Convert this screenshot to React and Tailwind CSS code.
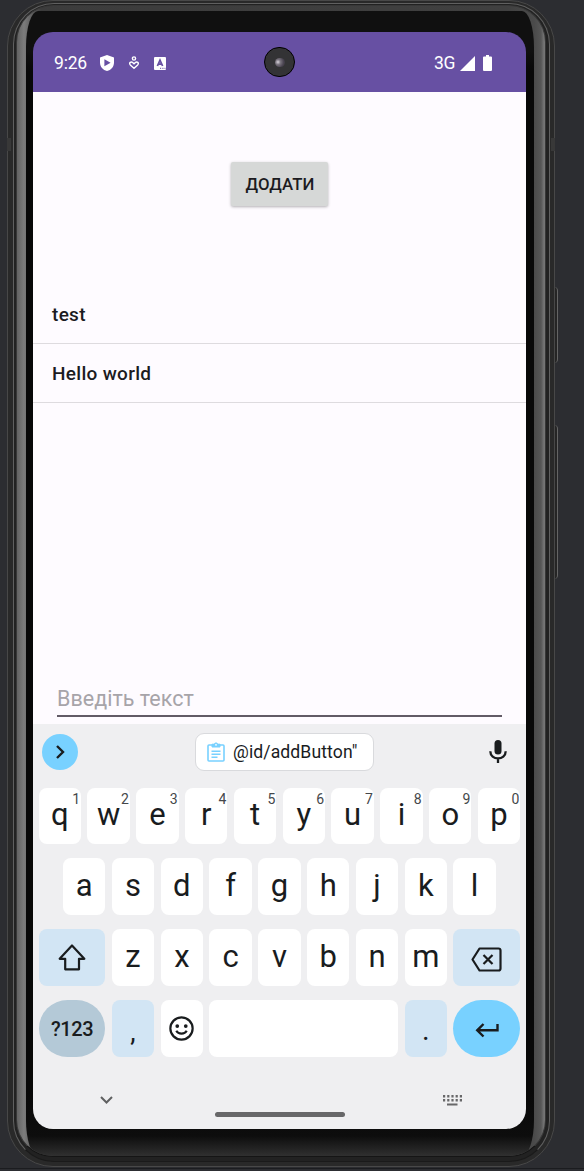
import React from 'react';

const keyBase = 'relative flex h-[56.5px] shrink-0 items-center justify-center';

function Key({ label, hint }) {
  return (
    <div className={`${keyBase} w-[42.5px] rounded-lg bg-white`}>
      <span className="relative -top-[1.5px] text-[31px] leading-none text-[#191c1e]">{label}</span>
      {hint && <span className="absolute right-[1px] top-[4px] text-[14px] leading-[14px] text-[#44474a]">{hint}</span>}
    </div>
  );
}

function Row({ children, className = '' }) {
  return <div className={`flex gap-[6.3px] ${className}`}>{children}</div>;
}

function StatusBar() {
  return (
    <div className="relative flex h-[60px] shrink-0 items-center bg-[#6750a3] pl-[21px] pr-[34px] pt-[2px] text-white">
      <span className="w-[33px] whitespace-nowrap text-[17.5px] tracking-[-0.2px]">9:26</span>
      <svg className="ml-[12px]" width="16" height="18" viewBox="0 0 16 18">
        <path fill="#fff" d="M8 1 15 3.4V8.5C15 13 12 16 8 17 4 16 1 13 1 8.5V3.4Z" />
        <path fill="#6750a3" d="M5.4 5.2v7L11.6 8.7Z" />
      </svg>
      <svg className="ml-[12.5px]" width="12" height="14" viewBox="0 0 12 14" fill="none" stroke="#fff" strokeWidth="1.4">
        <circle cx="6" cy="2.5" r="1.6" />
        <path d="M6 12.3 2.3 8.9C.6 6.8 3 4.9 4.9 6.7L6 7.8 7.1 6.7C9 4.9 11.4 6.8 9.7 8.9Z" />
      </svg>
      <svg className="ml-[14.5px]" width="12" height="13" viewBox="0 0 12 13">
        <rect width="12" height="13" rx="1" fill="#fff" />
        <path d="M3.4 9 6 3.2 8.6 9M4.4 7.2h3.2" fill="none" stroke="#6750a3" strokeWidth="1.8" />
        <path d="M6 11.3h1.2M8.3 11.3h1.2M10.5 11.3h1" stroke="#6750a3" />
      </svg>
      <div className="absolute left-[231px] top-[15px] flex h-[30px] w-[31px] items-center justify-center rounded-full border border-black bg-[#333335]">
        <span className="h-[9px] w-[10px] rounded-full bg-[radial-gradient(circle_at_30%_45%,#d8d4dc_0,#77727c_30%,#4a4451_65%,#333335_100%)]" />
      </div>
      <span className="ml-auto text-[17.5px] tracking-[-0.4px]">3G</span>
      <svg className="ml-[5px]" width="15" height="15" viewBox="0 0 15 15"><path d="M15 0v15H0Z" fill="#fff" /></svg>
      <svg className="ml-[8px]" width="9" height="16" viewBox="0 0 9 16"><path d="M3 0h3v1.5h2a1 1 0 0 1 1 1V15a1 1 0 0 1-1 1H1a1 1 0 0 1-1-1V2.5a1 1 0 0 1 1-1h2Z" fill="#fff" /></svg>
    </div>
  );
}

function AppContent() {
  return (
    <div className="flex h-[632px] shrink-0 flex-col bg-[#fefbff] text-[#1c1b1f]">
      <div className="mt-[70px] flex h-[44px] w-[97px] items-center justify-center self-center rounded-[2px] bg-[#d6d8d7] pl-px pt-[2px] text-[16.8px] font-medium tracking-[0.1px] shadow-[0_1px_3px_rgba(0,0,0,0.3)]">
        ДОДАТИ
      </div>
      <div className="mt-[79px] flex h-[59px] items-center border-b border-[#dedbdf] pl-[19px] pt-[2px] text-[19px] font-medium tracking-[0.3px]">test</div>
      <div className="flex h-[59px] items-center border-b border-[#dedbdf] pl-[19px] pt-[2px] text-[19px] font-medium tracking-[0.3px]">Hello world</div>
      <div className="mb-[7px] ml-[24px] mt-auto flex h-[36px] w-[445px] items-center border-b-2 border-[#625b66] pt-[3px] text-[21.5px] tracking-[0.02px] text-[#a7a4a9]">
        Введіть текст
      </div>
    </div>
  );
}

function Keyboard() {
  const stroke = { fill: 'none', stroke: '#191c1e', strokeWidth: 2 };
  return (
    <div className="flex h-[405px] shrink-0 flex-col bg-[#efeff1] pl-[5.6px] text-[#191c1e]">
      <div className="flex h-[56px] items-center pl-[3.4px] pr-[19px]">
        <div className="flex size-[36px] items-center justify-center rounded-full bg-[#78d1ff]">
          <svg width="12" height="16" viewBox="0 0 12 16" {...stroke} strokeWidth="2.4"><path d="m3 2 6 6-6 6" /></svg>
        </div>
        <div className="ml-[117px] flex h-[38px] w-[179px] items-center rounded-[9px] border border-[#d9dadd] bg-white pl-[11px]">
          <svg width="18" height="20" viewBox="0 0 18 20" fill="none" stroke="#78d1ff" strokeWidth="1.6">
            <rect x="1" y="3" width="16" height="16" rx="1" />
            <path d="M4.5 9.3h9M4.5 12.3h9M4.5 15.3h6" />
            <path d="M5 5V2.2h2.2a1.9 1.9 0 0 1 3.6 0H13V5Z" fill="#78d1ff" strokeWidth="1" />
            <circle cx="9" cy="2.8" r=".9" fill="#fff" stroke="none" />
          </svg>
          <span className="ml-[8px] whitespace-nowrap text-[17.6px] tracking-[0.1px]">@id/addButton"</span>
        </div>
        <svg className="ml-auto" width="18" height="24" viewBox="0 0 18 24">
          <rect x="5.5" y="0" width="7" height="14.5" rx="3.5" fill="#191c1e" />
          <path d="M1.3 11.3c0 9.4 15.4 9.4 15.4 0M9 18.5V23" {...stroke} strokeWidth="2.3" />
        </svg>
      </div>
      <div className="mt-[7.7px] flex flex-col gap-[14.3px]">
        <Row>{'qwertyuiop'.split('').map((c, i) => <Key key={c} label={c} hint={String((i + 1) % 10)} />)}</Row>
        <Row className="pl-[24.4px]">{'asdfghjkl'.split('').map((c) => <Key key={c} label={c} />)}</Row>
        <Row>
          <div className={`${keyBase} w-[66.9px] rounded-lg bg-[#d2e5f4]`}>
            <svg width="28" height="27" viewBox="0 0 28 27" {...stroke} strokeWidth="2.2" strokeLinejoin="round"><path d="M14 1.5 26.3 14.8H21V25.3H7.2V14.8H1.7Z" /></svg>
          </div>
          {'zxcvbnm'.split('').map((c) => <Key key={c} label={c} />)}
          <div className={`${keyBase} w-[66.9px] rounded-lg bg-[#d2e5f4]`}>
            <svg className="mt-[3px]" width="31" height="25" viewBox="0 0 31 25" {...stroke} strokeWidth="2.2" strokeLinejoin="round">
              <path d="M8.5 1.5H27.5Q29.5 1.5 29.5 3.5V21.5Q29.5 23.5 27.5 23.5H8.5L1.5 12.5ZM12.5 8l9 9M21.5 8l-9 9" />
            </svg>
          </div>
        </Row>
        <Row>
          <div className={`${keyBase} w-[66.9px] rounded-[28.5px] bg-[#b4c9d7] pt-[2px] text-[20px] font-medium tracking-[-0.4px]`}>?123</div>
          <div className={`${keyBase} w-[42.5px] rounded-lg bg-[#d2e5f4] pt-[8px] text-[27px]`}>,</div>
          <div className={`${keyBase} w-[42.5px] rounded-lg bg-white`}>
            <svg className="mt-px" width="25" height="25" viewBox="0 0 24 24" {...stroke} strokeWidth="2.1">
              <circle cx="12" cy="12" r="10.7" />
              <path d="M7 14.2c2 3.6 8 3.6 10 0" />
              <circle cx="7.9" cy="9.7" r="1.8" fill="#191c1e" stroke="none" /><circle cx="16.1" cy="9.7" r="1.8" fill="#191c1e" stroke="none" />
            </svg>
          </div>
          <div className={`${keyBase} w-[188.9px] rounded-lg bg-white`} />
          <div className={`${keyBase} w-[42.5px] rounded-lg bg-[#d2e5f4] pt-[4px] text-[29px]`}>.</div>
          <div className={`${keyBase} w-[66.9px] rounded-[28.5px] bg-[#78d1ff]`}>
            <svg className="mt-[3px]" width="24" height="16" viewBox="0 0 24 16" {...stroke} strokeWidth="2.4"><path d="M22.5 2v6.3H2.5M8.5 2 2.2 8.3 8.5 14.5" /></svg>
          </div>
        </Row>
      </div>
      <div className="mt-auto flex h-[72px] items-center">
        <svg className="ml-[61px] mt-[14px]" width="13" height="8" viewBox="0 0 13 8" fill="none" stroke="#5f6061" strokeWidth="2"><path d="m1 1 5.5 5.5L12 1" /></svg>
        <div className="ml-[102px] mt-[42px] h-[5px] w-[130px] rounded-full bg-[#676769]" />
        <svg className="ml-[98.5px] mt-[15px]" width="19" height="11" viewBox="0 0 19 11" fill="none" stroke="#676769" strokeWidth="2">
          <path d="M0 1.3h19M0 5.3h19" strokeDasharray="2.2 2" strokeWidth="2.5" /><path d="M4 9.5h10.5" />
        </svg>
      </div>
    </div>
  );
}

export default function App() {
  return (
    <div className="relative h-[1171px] w-[584px] overflow-hidden bg-[linear-gradient(#2c2d31_0_1168px,#1b1c1f_1168px_1169px,#2c2d31_1169px)] pl-[7px] font-[Roboto,'Noto_Sans',sans-serif]">
      <div className="absolute left-[552px] top-[287px] h-[76px] w-[6px] rounded-r-sm border-r border-[#656565] bg-[#252525]" />
      <div className="absolute left-[552px] top-[425px] h-[154px] w-[6px] rounded-r-sm border-r border-[#656565] bg-[#252525]" />
      <div className="relative h-[1167px] w-[548px] rounded-[46px] border border-[#484848] bg-[#292929] pb-[4px] pl-[5px] pr-[4px] pt-[2px]">
        <div className="h-full rounded-[41px] border border-[#606060] border-b-[#1a1a1a] bg-[#222] pb-[4px] pl-[2px] pr-[3px] pt-px">
          <div className="h-full overflow-hidden rounded-[37px] border border-[#383838] border-b-[#151515] bg-[linear-gradient(90deg,#636363_0,#7c7c7c_7px,#3c3c3c_24px,#404040_490px,#4a4a4a_517px,#565656_524px,#757575_527px)] pl-[9px] pr-[11px] pt-[5px]">
            <div className="flex h-full flex-col rounded-[12px/36px] bg-[linear-gradient(#101010_0,#101010_40px,#080808_60px,#080808_1080px,#0d0d0d_1125px,#303030_100%)] pl-[7px] pt-[21px]">
              <div className="flex h-[1097px] w-[493px] shrink-0 flex-col overflow-hidden rounded-[20px]">
                <StatusBar />
                <AppContent />
                <Keyboard />
              </div>
            </div>
          </div>
        </div>
      </div>
      <div className="absolute left-[7px] top-[138px] h-[13px] w-[4px] bg-[#383838]" />
      <div className="absolute left-[551px] top-[138px] h-[13px] w-[4px] bg-[#383838]" />
    </div>
  );
}
